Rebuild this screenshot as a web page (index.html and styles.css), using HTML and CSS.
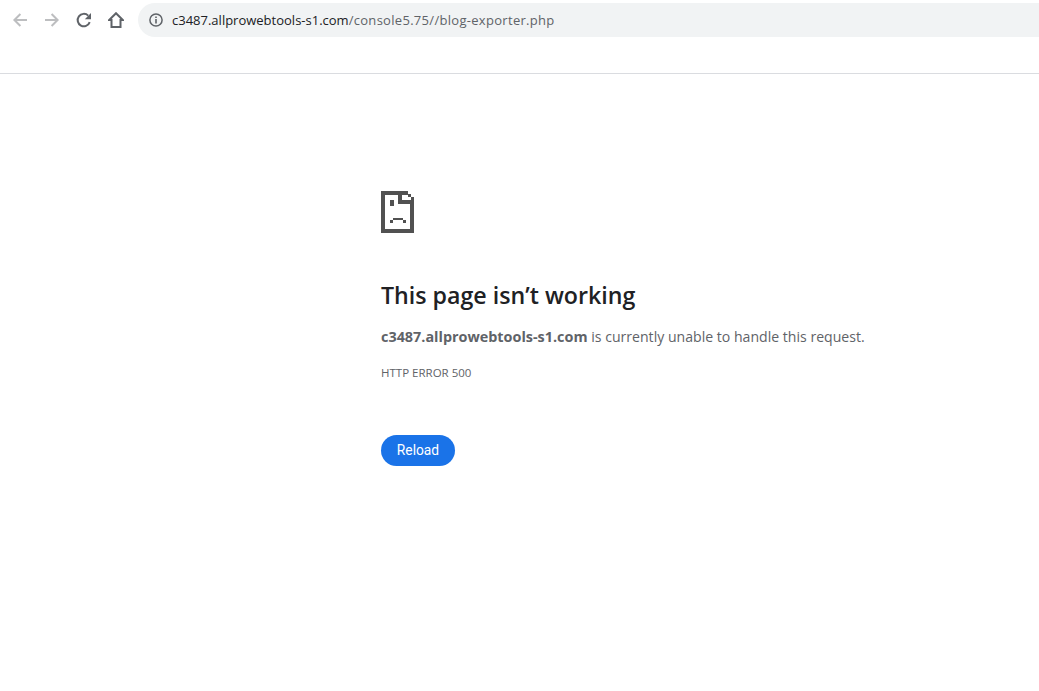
FILE: index.html
```html
<!DOCTYPE html>
<html>
<head lang="en">
    <meta charset="UTF-8">
    <title>This page isn't working</title>
    <link rel="stylesheet" href="styles.css">
</head>
<body>
    <div class="toolbar">
        <div class="navbuttons">
            <svg class="navicon" width="16" height="16" viewBox="0 0 16 16"><path d="M15 8H3M8.4 2L2.4 8l6 6" fill="none" stroke="#bdbec0" stroke-width="2"/></svg>
            <svg class="navicon" width="16" height="16" viewBox="0 0 16 16"><path d="M1 8h12M7.6 2l6 6-6 6" fill="none" stroke="#bdbec0" stroke-width="2"/></svg>
            <svg class="navicon" width="16" height="16" viewBox="0 0 16 16"><path d="M13.7 10.2A6.2 6.2 0 1 1 12.2 3.6" fill="none" stroke="#5f6368" stroke-width="2"/><path d="M15 1v6.2H8.8z" fill="#5f6368"/></svg>
            <svg class="navicon" width="16" height="16" viewBox="0 0 16 16"><path d="M8 1.2L1.2 8h2.3v7h9V8h2.3z" fill="none" stroke="#5f6368" stroke-width="2"/></svg>
        </div>
        <div class="omnibox">
            <svg class="infoicon" width="14" height="14" viewBox="0 0 14 14"><circle cx="7" cy="7" r="6.1" fill="none" stroke="#5f6368" stroke-width="1.5"/><path d="M6.2 6h1.6v4.4H6.2zM6.2 3.4h1.6V5H6.2z" fill="#5f6368"/></svg>
            <span class="host">c3487.allprowebtools-s1.com</span><span class="path">/console5.75//blog-exporter.php</span>
        </div>
    </div>

    <div class="content">
        <svg class="sadicon" width="33" height="42" viewBox="0 0 33 42">
            <path d="M0 0h27v4H4v34h25V9h4v33H0z" fill="#515151"/>
            <path d="M17 0h4v9h9v4H17zM27 3h3v3h-3zM30 6h3v3h-3z" fill="#515151"/>
            <path d="M9 9h4v6H9zM9 29h3v3H9zM12 27h10v2H12zM22 29h3v3h-3z" fill="#515151"/>
        </svg>
        <h1 class="title">This page isn’t working</h1>
        <p class="message"><strong class="hostname">c3487.allprowebtools-s1.com</strong> is currently unable to handle this request.</p>
        <div class="errorcode">HTTP ERROR 500</div>
        <button class="reload">Reload</button>
    </div>
</body>
</html>
```

FILE: styles.css
```css
html, body {
    margin: 0;
    padding: 0;
    background-color: #fff;
}
body {
    font-family: "Open Sans", "Noto Sans", sans-serif;
    overflow: hidden;
}
.toolbar {
    display: flex;
    align-items: flex-start;
    height: 70px;
    padding-top: 3px;
    border-bottom: 1px solid #dadce0;
}
.navbuttons {
    display: flex;
    gap: 16px;
    padding: 9px 0 0 12px;
}
.omnibox {
    display: flex;
    align-items: center;
    height: 34px;
    flex: 1;
    margin-left: 14px;
    padding-left: 11px;
    border-radius: 17px 0 0 17px;
    background-color: #f1f3f4;
    font-size: 13px;
}
.infoicon {
    margin-right: 9px;
}
.host {
    color: #202124;
}
.path {
    color: #5f6368;
    letter-spacing: 0.3px;
}
.content {
    width: 600px;
    margin-left: 381px;
    padding-top: 117px;
}
.sadicon {
    display: block;
    shape-rendering: crispEdges;
}
.title {
    margin: 47px 0 0;
    font-size: 23.2px;
    line-height: 30px;
    font-weight: 550;
    color: #202124;
}
.message {
    margin: 16px 0 0;
    font-size: 14.1px;
    line-height: 22px;
    color: #5f6368;
}
.hostname {
    font-size: 14.4px;
}
.errorcode {
    margin-top: 17px;
    font-size: 11.5px;
    line-height: 16px;
    color: #5f6368;
}
.reload {
    display: block;
    margin-top: 54px;
    width: 74px;
    height: 31px;
    padding: 0 0 2px;
    border: 0;
    border-radius: 16px;
    background-color: #1a73e8;
    color: #fff;
    font-family: Roboto, sans-serif;
    font-size: 13.8px;
    font-weight: 400;
}
```
